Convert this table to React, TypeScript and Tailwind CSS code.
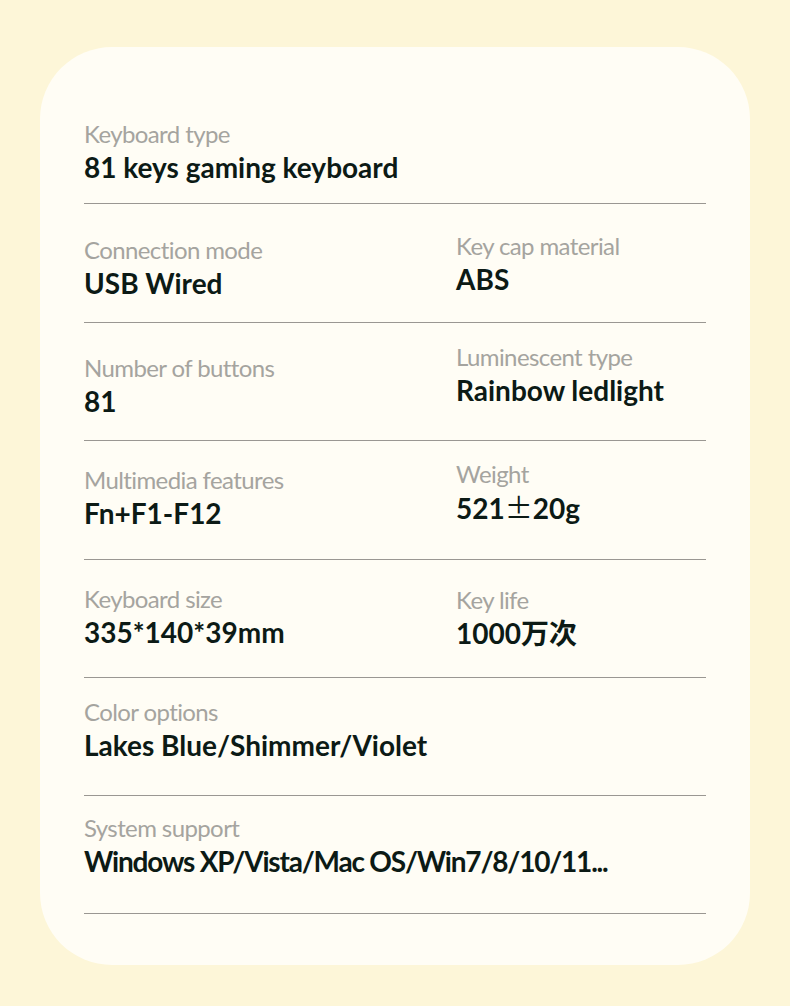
const font = { fontFamily: 'Lato, "Noto Sans CJK SC", sans-serif' }

type Cell = { label: string; value: React.ReactNode; pt: string; tight?: boolean }

const rows: { cells: Cell[]; h: string }[] = [
  { h: "h-[157px] pt-[73px]", cells: [{ label: "Keyboard type", value: "81 keys gaming keyboard", pt: "pt-0" }] },
  {
    h: "h-[119px]",
    cells: [
      { label: "Connection mode", value: "USB Wired", pt: "pt-[32px]" },
      { label: "Key cap material", value: "ABS", pt: "pt-[28px]" },
    ],
  },
  {
    h: "h-[118px]",
    cells: [
      { label: "Number of buttons", value: "81", pt: "pt-[31px]" },
      { label: "Luminescent type", value: "Rainbow ledlight", pt: "pt-[20px]" },
    ],
  },
  {
    h: "h-[119px]",
    cells: [
      { label: "Multimedia features", value: "Fn+F1-F12", pt: "pt-[25px]" },
      {
        label: "Weight",
        value: (
          <>
            521<span className="font-['Noto_Sans_CJK_SC'] font-normal">±</span>20g
          </>
        ),
        pt: "pt-[19px]",
      },
    ],
  },
  {
    h: "h-[118px]",
    cells: [
      { label: "Keyboard size", value: "335*140*39mm", pt: "pt-[25px]" },
      { label: "Key life", value: "1000万次", pt: "pt-[26px]" },
    ],
  },
  { h: "h-[118px]", cells: [{ label: "Color options", value: "Lakes Blue/Shimmer/Violet", pt: "pt-[20px]" }] },
  {
    h: "h-[118px]",
    cells: [{ label: "System support", value: "Windows XP/Vista/Mac OS/Win7/8/10/11...", pt: "pt-[18px]", tight: true }],
  },
]

export default function App() {
  return (
    <div className="min-h-[1006px] w-[790px] bg-[#fdf6d8] pt-[47px]" style={font}>
      <div className="mx-[40px] h-[918px] rounded-[72px] bg-[#fffdf5] px-[44px]">
        {rows.map((row, i) => (
          <div key={i} className={`flex border-b border-[#9a9792] ${row.h}`}>
            {row.cells.map((c, j) => (
              <div key={j} className={`${j === 0 ? "w-[372px]" : "flex-1"} ${c.pt}`}>
                <div className="h-[28px] whitespace-nowrap text-[24px] leading-[28px] tracking-[-0.6px] text-[#a5a49f]">
                  {c.label}
                </div>
                <div
                  className={`mt-[2px] h-[34px] whitespace-nowrap text-[28px] font-bold leading-[34px] text-[#0c1a15] ${
                    c.tight ? "tracking-[-1.2px]" : "tracking-[0px]"
                  }`}
                >
                  {c.value}
                </div>
              </div>
            ))}
          </div>
        ))}
      </div>
    </div>
  )
}
